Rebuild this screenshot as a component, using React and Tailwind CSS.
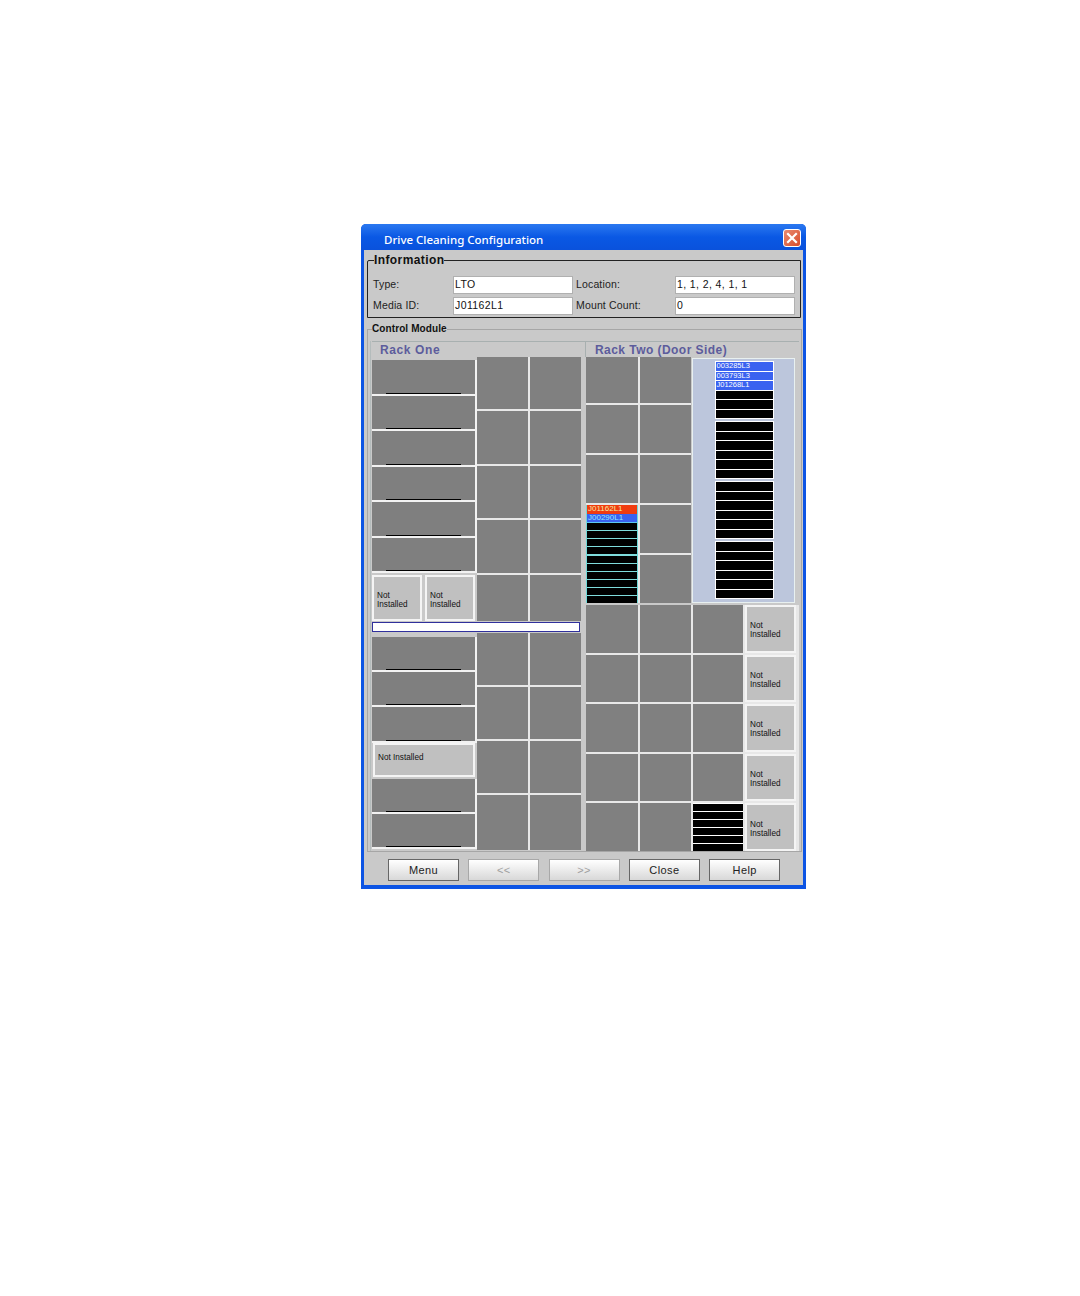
import React from "react";

const Gray = ({ className = "" }) => <div className={"bg-[#808080] " + className} />;

const Slot = () => (
  <div className="flex-1 min-h-0 bg-[#7f7f7f] border-r-2 border-b-2 border-[#f2f2f2] flex flex-col justify-end items-center">
    <div className="w-[75px] h-px bg-black" />
  </div>
);

const NotInstalled = ({ className = "", oneLine = false }) => (
  <div className={"bg-[#c0c0c0] border-2 border-[#f4f4f4] flex items-center pl-[3px] text-[8.2px] leading-[9px] text-[#111] " + (oneLine ? "" : "pt-[3px] ") + className}>
    {oneLine ? <span>Not Installed</span> : <span>Not<br />Installed</span>}
  </div>
);

const GrayGrid = ({ rows, className = "" }) => (
  <div className={"grid grid-cols-[51px_51px] gap-[2px] " + className}>
    {Array.from({ length: rows * 2 }).map((_, i) => (
      <Gray key={i} />
    ))}
  </div>
);

const Tape = ({ children, color = "bg-black", text = "text-white" }) => (
  <div className={"flex-1 min-h-0 overflow-hidden text-[7.5px] leading-[8px] pl-px whitespace-nowrap " + color + " " + text}>
    {children}
  </div>
);

const TapeGroup = ({ labels = [] }) => (
  <div className="h-[58px] flex flex-col gap-px bg-white border border-white">
    {Array.from({ length: 6 }).map((_, i) => (
      <Tape key={i} color={labels[i] ? "bg-[#3a62f0]" : "bg-black"}>{labels[i] || ""}</Tape>
    ))}
  </div>
);

const CyanMag = () => (
  <div className="row-span-2 bg-[#7fdcdc] flex flex-col border-x border-[#70d8d8]">
    <div className="h-[9px] bg-[#f03c10] text-[#f5e8a0] text-[8px] leading-[8px] pl-px">J01162L1</div>
    <div className="h-[8.5px] bg-[#3a62f0] text-[#8fe8ff] text-[8px] leading-[8px] pl-px border-b border-[#5cc8f0]">J00290L1</div>
    <div className="h-[31px] flex flex-col gap-px">
      {[0, 1, 2, 3].map((i) => <div key={i} className="flex-1 bg-black" />)}
    </div>
    <div className="h-[2px]" />
    <div className="flex-1 flex flex-col gap-px">
      {[0, 1, 2, 3, 4, 5].map((i) => <div key={i} className="flex-1 bg-black" />)}
    </div>
  </div>
);

const Btn = ({ children, disabled }) => (
  <button
    className={
      "w-[71px] h-[22px] border bg-gradient-to-b from-white to-[#d8d8d8] text-[11px] tracking-[0.4px] " +
      (disabled ? "border-[#a8a8a8] text-[#a0a0a0]" : "border-[#666] text-[#222]")
    }
  >
    {children}
  </button>
);

const Field = ({ value }) => (
  <div className="w-[120px] h-[18px] bg-white border border-[#b0b0b0] text-[10.5px] leading-[15px] pl-px tracking-[0.4px] text-[#111]">{value}</div>
);

export default function App() {
  return (
    <div className="w-[1080px] h-[1296px] bg-white pt-[224px] pl-[361px] font-['Liberation_Sans',sans-serif]">
      <div className="w-[445px] h-[665px] bg-[#0c54e4] rounded-t-[5px] flex flex-col px-[3px] pb-[4px]">
        <div className="h-[26px] shrink-0 -mx-[3px] rounded-t-[5px] bg-gradient-to-b from-[#2a78f0] via-[#0a58e4] to-[#0a52dc] flex items-center justify-between pl-[23px] pr-[5px] pt-[2px]">
          <span className="font-['Noto_Sans',sans-serif] text-[11.5px] font-medium text-white leading-none pt-[3px]">Drive Cleaning Configuration</span>
          <div className="w-[18px] h-[18px] rounded-[3px] bg-gradient-to-br from-[#e88a70] to-[#d84a28] border border-white flex items-center justify-center">
            <svg width="12" height="12" viewBox="0 0 12 12"><path d="M2 2 L10 10 M10 2 L2 10" stroke="white" strokeWidth="2.2" strokeLinecap="square" /></svg>
          </div>
        </div>

        <div className="flex-1 bg-[#c9c9c9] flex flex-col pl-[3px]">
          <fieldset className="w-[434px] h-[65px] mt-[3px] border border-[#222] pl-[5px] rounded-tl-[2px]">
            <legend className="ml-[1px] text-[12px] leading-[14px] font-bold tracking-[0.4px] text-[#111]">Information</legend>
            <div className="grid grid-cols-[80px_120px_102px_120px] gap-y-[3px] items-center pt-[9px] text-[10.5px] tracking-[0.15px] text-[#222]">
              <span>Type:</span><Field value="LTO" />
              <span className="pl-[3px]">Location:</span><Field value="1, 1, 2, 4, 1, 1" />
              <span>Media ID:</span><Field value="J01162L1" />
              <span className="pl-[3px]">Mount Count:</span><Field value="0" />
            </div>
          </fieldset>

          <fieldset className="w-[434px] h-[529px] mt-[5px] border border-[#a6a6a6] px-[2px]">
            <legend className="ml-[2px] text-[10px] leading-[12px] tracking-[0.1px] font-bold text-[#111]">Control Module</legend>
            <div className="flex pt-[6px]">
              {/* Rack One */}
              <div className="w-[215px] flex flex-col pl-[1px] border-l border-[#b4bcbc]">
                <div className="h-[16px] border-t border-[#a8b0b0] pl-[8px] text-[12px] leading-[16px] font-bold tracking-[0.6px] text-[#5c5c9c]">Rack One</div>
                <div className="flex h-[264px]">
                  <div className="w-[105px] pt-[3px] flex flex-col">
                    <div className="h-[213px] flex flex-col">
                      {[0, 1, 2, 3, 4, 5].map((i) => <Slot key={i} />)}
                    </div>
                    <div className="flex-1 flex gap-[3px] pt-[2px] pr-[2px]">
                      <NotInstalled className="w-[50px]" />
                      <NotInstalled className="w-[50px]" />
                    </div>
                  </div>
                  <GrayGrid rows={5} className="grid-rows-[52px_53px_52px_53px_46px] pb-[1px] bg-[#e8e8e8]" />
                </div>
                <div className="h-[10px] w-[208px] mt-[1px] bg-white border border-[#30309c]" />
                <div className="flex h-[217px] mt-[1px]">
                  <div className="w-[105px] pt-[4px] pb-[1px] flex flex-col">
                    <Slot /><Slot /><Slot />
                    <NotInstalled oneLine className="h-[34px] shrink-0 mr-[2px] ml-px pb-[5px]" />
                    <div className="h-[2px] shrink-0" />
                    <Slot /><Slot />
                  </div>
                  <GrayGrid rows={4} className="grid-rows-[52px_52px_52px_55px] bg-[#e8e8e8]" />
                </div>
              </div>

              {/* Rack Two */}
              <div className="w-[214px] flex flex-col">
                <div className="h-[16px] border-t border-l border-[#a8b0b0] pl-[9px] text-[12px] leading-[16px] font-bold tracking-[0.45px] text-[#5c5c9c]">Rack Two (Door Side)</div>
                <div className="flex pl-[1px] gap-[1px] h-[247px]">
                  <div className="grid grid-cols-[52px_51px] grid-rows-[46px_48px_48px_48px_48px] gap-[2px] bg-[#e8e8e8] pb-[1px] h-[246px]">
                    <Gray /><Gray />
                    <Gray /><Gray />
                    <Gray /><Gray />
                    <CyanMag />
                    <Gray />
                    <Gray />
                  </div>
                  <div className="w-[103px] h-[245px] mt-px bg-[#bcc6dc] border border-[#e8f0f0] flex justify-center pt-[2px]">
                    <div className="w-[59px] ml-[1px] flex flex-col gap-[2px] h-[238px]">
                      <TapeGroup labels={["003285L3", "003793L3", "J01268L1"]} />
                      <TapeGroup />
                      <TapeGroup />
                      <TapeGroup />
                    </div>
                  </div>
                </div>
                <div className="grid grid-cols-[52px_50.5px_50.5px_51px] grid-rows-[repeat(5,47.6px)] gap-[2px] ml-[1px] mt-px bg-[#e8e8e8]">
                  {[0, 1, 2, 3].map((r) => (
                    <React.Fragment key={r}>
                      <Gray /><Gray /><Gray />
                      <NotInstalled />
                    </React.Fragment>
                  ))}
                  <Gray /><Gray />
                  <div className="flex flex-col gap-px bg-white pt-px">
                    {[0, 1, 2, 3, 4, 5].map((i) => <div key={i} className="flex-1 bg-black" />)}
                  </div>
                  <NotInstalled />
                </div>
              </div>
            </div>
          </fieldset>

          <div className="flex gap-[9.3px] pl-[21px] pt-[7px]">
            <Btn>Menu</Btn>
            <Btn disabled>&lt;&lt;</Btn>
            <Btn disabled>&gt;&gt;</Btn>
            <Btn>Close</Btn>
            <Btn>Help</Btn>
          </div>
        </div>
      </div>
    </div>
  );
}
